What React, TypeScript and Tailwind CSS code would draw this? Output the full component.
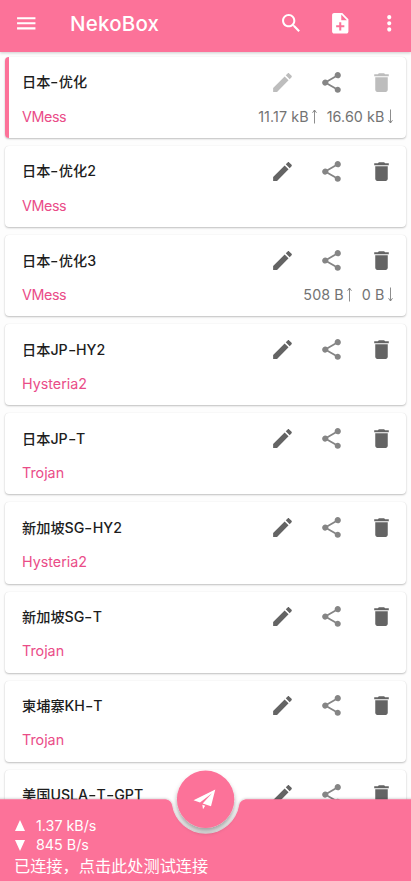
import React, { Fragment } from "react";

type Profile = {
  name: string;
  type: string;
  up?: string;
  down?: string;
  selected?: boolean;
};

const profiles: Profile[] = [
  { name: "日本-优化", type: "VMess", up: "11.17 kB", down: "16.60 kB", selected: true },
  { name: "日本-优化2", type: "VMess" },
  { name: "日本-优化3", type: "VMess", up: "508 B", down: "0 B" },
  { name: "日本JP-HY2", type: "Hysteria2" },
  { name: "日本JP-T", type: "Trojan" },
  { name: "新加坡SG-HY2", type: "Hysteria2" },
  { name: "新加坡SG-T", type: "Trojan" },
  { name: "柬埔寨KH-T", type: "Trojan" },
  { name: "美国USLA-T-GPT", type: "Trojan" },
];

const icons = {
  menu: "M3 18h18v-2H3v2zm0-5h18v-2H3v2zm0-7v2h18V6H3z",
  search:
    "M15.5 14h-.79l-.28-.27C15.41 12.59 16 11.11 16 9.5 16 5.91 13.09 3 9.5 3S3 5.91 3 9.5 5.91 16 9.5 16c1.61 0 3.09-.59 4.23-1.57l.27.28v.79l5 4.99L20.49 19l-4.99-5zm-6 0C7.01 14 5 11.99 5 9.5S7.01 5 9.5 5 14 7.01 14 9.5 11.99 14 9.5 14z",
  noteAdd:
    "M14 2H6c-1.1 0-1.99.9-1.99 2L4 20c0 1.1.89 2 1.99 2H18c1.1 0 2-.9 2-2V8l-6-6zm2 14h-3v3h-2v-3H8v-2h3v-3h2v3h3v2zm-3-7V3.5L18.5 9H13z",
  more: "M12 8c1.1 0 2-.9 2-2s-.9-2-2-2-2 .9-2 2 .9 2 2 2zm0 2c-1.1 0-2 .9-2 2s.9 2 2 2 2-.9 2-2-.9-2-2-2zm0 6c-1.1 0-2 .9-2 2s.9 2 2 2 2-.9 2-2-.9-2-2-2z",
  edit: "M3 17.25V21h3.75L17.81 9.94l-3.75-3.75L3 17.25zM20.71 7.04c.39-.39.39-1.02 0-1.41l-2.34-2.34c-.39-.39-1.02-.39-1.41 0l-1.83 1.83 3.75 3.75 1.83-1.83z",
  share:
    "M18 16.08c-.76 0-1.44.3-1.96.77L8.91 12.7c.05-.23.09-.46.09-.7s-.04-.47-.09-.7l7.05-4.11c.54.5 1.25.81 2.04.81 1.66 0 3-1.34 3-3s-1.34-3-3-3-3 1.34-3 3c0 .24.04.47.09.7L8.04 9.81C7.5 9.31 6.79 9 6 9c-1.66 0-3 1.34-3 3s1.34 3 3 3c.79 0 1.5-.31 2.04-.81l7.12 4.16c-.05.21-.08.43-.08.65 0 1.61 1.31 2.92 2.92 2.92 1.61 0 2.92-1.31 2.92-2.92s-1.31-2.92-2.92-2.92z",
  trash: "M6 19c0 1.1.9 2 2 2h8c1.1 0 2-.9 2-2V7H6v12zM19 4h-3.5l-1-1h-5l-1 1H5v2h14V4z",
};

function Icon({ name, className }: { name: keyof typeof icons; className: string }) {
  return (
    <svg viewBox="0 0 24 24" fill="currentColor" className={"shrink-0 " + className}>
      <path d={icons[name]} />
    </svg>
  );
}

function Arrow({ down = false }: { down?: boolean }) {
  return (
    <span className="inline-flex w-[12px] justify-center">
      <svg viewBox="0 0 7 15" className={"h-[15px] w-[7px]" + (down ? " rotate-180" : "")} fill="none" stroke="#808080" strokeWidth=".9">
        <path d="M3.5 14.5V1M1.5 3.800 3.500 1l2 2.800" />
      </svg>
    </span>
  );
}

function Name({ text }: { text: string }) {
  return (
    <>
      {text.split("-").map((part, i) => (
        <Fragment key={i}>
          {i > 0 && <span className="inline-block w-[8.4px] scale-x-[1.3] text-center">-</span>}
          {part}
        </Fragment>
      ))}
    </>
  );
}

function Card({ p }: { p: Profile }) {
  const tone = p.selected ? "text-[#bdbdbd]" : "text-[#646464]";
  return (
    <div className="flex h-[81.1px] shrink-0 overflow-hidden rounded-[4px] bg-white shadow-[0_1px_2px_rgba(0,0,0,0.24),0_0_1px_rgba(0,0,0,0.1)]">
      <div className={"w-1 shrink-0 " + (p.selected ? "bg-[#fc7299]" : "")} />
      <div className="flex min-w-0 flex-1 flex-col pl-[13px] pr-[12.5px]">
        <div className="flex h-[50px] items-center">
          <div className="flex-1 whitespace-nowrap text-[14.2px] font-medium text-[#1d1d1d]">
            <Name text={p.name} />
          </div>
          <Icon name="edit" className={"mr-[24.5px] size-[25px] " + tone} />
          <Icon name="share" className="mr-[24.5px] size-[25px] text-[#858585]" />
          <Icon name="trash" className={"size-[25px] " + tone} />
        </div>
        <div className="flex h-[19px] items-center justify-between whitespace-nowrap text-[14.3px]">
          <span className={"text-[#ea4c88]" + (p.type === "VMess" ? " tracking-[-0.4px]" : "")}>{p.type}</span>
          {p.up && (
            <span className="-mr-[3px] flex items-center tracking-[0.1px] text-[#737373]">
              {p.up}
              <Arrow />
              <span className="w-[6px]" />
              {p.down}
              <Arrow down />
            </span>
          )}
        </div>
      </div>
    </div>
  );
}

export default function App() {
  return (
    <div className="relative flex h-[881px] w-[411px] flex-col overflow-hidden bg-[#fdfdfd] font-['Inter','Noto_Sans_CJK_SC',sans-serif]">
      <header className="z-10 flex h-[51.5px] shrink-0 items-center bg-[#fc7299] pb-[5px] pl-[13.5px] pr-[9.5px] text-white shadow-[0_1px_3px_rgba(0,0,0,0.2)]">
        <Icon name="menu" className="size-[24.5px]" />
        <h1 className="ml-[32px] flex-1 pt-[2px] text-[20.5px] font-medium tracking-[0.2px]">NekoBox</h1>
        <Icon name="search" className="mr-[24.5px] size-[24.5px]" />
        <Icon name="noteAdd" className="mr-[24.5px] size-[24.5px]" />
        <Icon name="more" className="size-[24.5px]" />
      </header>
      <main className="flex min-h-0 flex-1 flex-col gap-2 overflow-hidden px-[5px] pt-[5.5px]">
        {profiles.map((p) => (
          <Card key={p.name} p={p} />
        ))}
      </main>

      <footer className="absolute inset-x-0 bottom-0 h-[120px]">
        <svg viewBox="0 761 411 120" className="absolute inset-0 h-[120px] w-[411px]">
          <defs>
            <filter id="barShadow" x="-5%" y="-20%" width="110%" height="140%">
              <feDropShadow dx="0" dy="0" stdDeviation="1.6" floodOpacity=".3" />
            </filter>
            <filter id="fabShadow" x="-40%" y="-40%" width="180%" height="180%">
              <feDropShadow dx="0" dy="4" stdDeviation="2.6" floodOpacity=".36" />
            </filter>
          </defs>
          <path
            d="M-5 799.3H164C169 799.3 171.3 802 172 805A34 34 0 0 0 239.2 805C240 802 242.5 799.3 247.5 799.3H416V890H-5Z"
            fill="#fc7299"
            filter="url(#barShadow)"
          />
          <circle cx="205.6" cy="799.2" r="28.7" fill="#fc7299" filter="url(#fabShadow)" />
          <path d="M215.3 789.5 193.5 800.2 200 802.6 212 793.3 202.7 803.6 211 806.3ZM202.3 804.7 205.2 805.7 203 809.2Z" fill="white" />
        </svg>
        <div className="relative flex h-full flex-col pl-[14px] pt-[55px] text-[14.3px] leading-[18px] text-white">
          <div className="flex h-[19.5px] items-center">
            <svg viewBox="0 0 12 11" className="mr-[10px] h-[11px] w-3" fill="white"><path d="M6 0 11 11H1Z" /></svg>
            <span>1.37 kB/s</span>
          </div>
          <div className="flex h-[19.5px] items-center">
            <svg viewBox="0 0 12 11" className="mr-[10px] h-[11px] w-3" fill="white"><path d="M6 11 1 0H11Z" /></svg>
            <span>845 B/s</span>
          </div>
          <div className="text-[16.2px] leading-[22px]">已连接，点击此处测试连接</div>
        </div>
      </footer>
    </div>
  );
}
